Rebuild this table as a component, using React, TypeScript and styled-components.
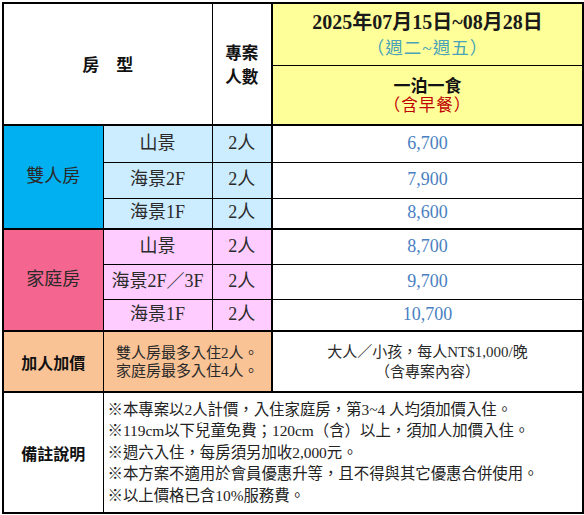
import React from "react";
import styled, { createGlobalStyle } from "styled-components";

const GlobalStyle = createGlobalStyle`
  html, body {
    margin: 0;
    padding: 0;
    background: #fff;
  }
  body {
    font-family: "Liberation Serif", "Noto Sans CJK TC", serif;
    color: #222;
  }
`;

const Page = styled.div`
  padding: 2px 0 0 2px;
`;

const Sheet = styled.table`
  border-collapse: collapse;
  table-layout: fixed;
  width: 580px;
  border: 2px solid #000;
`;

const Col = styled.col<{ $w: number }>`
  width: ${(p) => p.$w}px;
`;

const Row = styled.tr<{ $h: number }>`
  height: ${(p) => p.$h}px;
`;

const Cell = styled.td<{
  $bg?: string;
  $color?: string;
  $size?: number;
  $left?: boolean;
  $thickBottom?: boolean;
  $thickRight?: boolean;
}>`
  padding: 0;
  border: 1px solid #000;
  ${(p) => (p.$thickBottom ? "border-bottom-width: 2px;" : "")}
  ${(p) => (p.$thickRight ? "border-right-width: 2px;" : "")}
  background: ${(p) => p.$bg ?? "#fff"};
  color: ${(p) => p.$color ?? "#2a2a2a"};
  font-size: ${(p) => p.$size ?? 18}px;
  text-align: ${(p) => (p.$left ? "left" : "center")};
  vertical-align: middle;
  line-height: 1.2;
  white-space: nowrap;
`;

const Stack = styled.div<{ $gap: number }>`
  display: flex;
  flex-direction: column;
  align-items: center;
  gap: ${(p) => p.$gap}px;
`;

const Line = styled.span<{ $color?: string; $size?: number; $bold?: boolean; $track?: number }>`
  display: block;
  color: ${(p) => p.$color ?? "inherit"};
  font-size: ${(p) => (p.$size ? `${p.$size}px` : "inherit")};
  font-weight: ${(p) => (p.$bold ? 700 : "inherit")};
  letter-spacing: ${(p) => p.$track ?? 0}px;
`;

const BoldHead = styled.span<{ $size?: number; $lh?: number }>`
  display: block;
  font-family: "Noto Sans CJK TC", sans-serif;
  font-weight: 700;
  font-size: ${(p) => (p.$size ? `${p.$size}px` : "inherit")};
  line-height: ${(p) => (p.$lh ? `${p.$lh}px` : 1.25)};
  color: #111;
`;

const Notes = styled.div`
  padding: 0 4px;
  font-size: 15.4px;
  line-height: 21.5px;
  color: #222;
`;

const colors = {
  blue: "#00b0f0",
  lightBlue: "#ccecff",
  pink: "#f4658f",
  lightPink: "#ffccff",
  orange: "#f9c396",
  yellow: "#ffff99",
  price: "#4a7fc1",
};

type RoomRow = { name: string; people: string; price: string; h: number };

const groups: { title: string; bg: string; sub: string; rows: RoomRow[] }[] = [
  {
    title: "雙人房",
    bg: colors.blue,
    sub: colors.lightBlue,
    rows: [
      { name: "山景", people: "2人", price: "6,700", h: 37 },
      { name: "海景2F", people: "2人", price: "7,900", h: 36 },
      { name: "海景1F", people: "2人", price: "8,600", h: 31 },
    ],
  },
  {
    title: "家庭房",
    bg: colors.pink,
    sub: colors.lightPink,
    rows: [
      { name: "山景", people: "2人", price: "8,700", h: 35 },
      { name: "海景2F／3F", people: "2人", price: "9,700", h: 35 },
      { name: "海景1F", people: "2人", price: "10,700", h: 32 },
    ],
  },
];

const notes = [
  "※本專案以2人計價，入住家庭房，第3~4 人均須加價入住。",
  "※119cm以下兒童免費；120cm（含）以上，須加人加價入住。",
  "※週六入住，每房須另加收2,000元。",
  "※本方案不適用於會員優惠升等，且不得與其它優惠合併使用。",
  "※以上價格已含10%服務費。",
];

export default function App() {
  return (
    <Page>
      <GlobalStyle />
      <Sheet>
        <colgroup>
          <Col $w={100} />
          <Col $w={109} />
          <Col $w={60} />
          <Col $w={311} />
        </colgroup>
        <tbody>
          <Row $h={62}>
            <Cell colSpan={2} rowSpan={2} $size={17} $thickBottom>
              <BoldHead>房　型</BoldHead>
            </Cell>
            <Cell rowSpan={2} $size={16.5} $thickBottom $thickRight>
              <BoldHead $lh={24}>
                專案
                <br />
                人數
              </BoldHead>
            </Cell>
            <Cell $bg={colors.yellow}>
              <Stack $gap={4}>
                <Line $size={20} $bold $color="#1a1a1a">
                  2025年07月15日~08月28日
                </Line>
                <Line $size={17.5} $track={1} $color="#4aa3b8">
                  （週二~週五）
                </Line>
              </Stack>
            </Cell>
          </Row>
          <Row $h={60}>
            <Cell $bg={colors.yellow} $thickBottom>
              <Stack $gap={1}>
                <BoldHead $size={17}>一泊一食</BoldHead>
                <Line $size={16.5} $track={1} $color="#c00000">
                  （含早餐）
                </Line>
              </Stack>
            </Cell>
          </Row>

          {groups.map((g) =>
            g.rows.map((r, i) => {
              const last = i === g.rows.length - 1;
              return (
                <Row key={g.title + i} $h={r.h}>
                  {i === 0 && (
                    <Cell rowSpan={g.rows.length} $bg={g.bg} $thickBottom>
                      {g.title}
                    </Cell>
                  )}
                  <Cell $bg={g.sub} $thickBottom={last}>
                    {r.name}
                  </Cell>
                  <Cell $bg={g.sub} $thickBottom={last} $thickRight>
                    {r.people}
                  </Cell>
                  <Cell $color={colors.price} $thickBottom={last}>
                    {r.price}
                  </Cell>
                </Row>
              );
            })
          )}

          <Row $h={61}>
            <Cell $bg={colors.orange} $size={16} $thickBottom>
              <BoldHead>加人加價</BoldHead>
            </Cell>
            <Cell colSpan={2} $bg={colors.orange} $size={15} $thickBottom $thickRight>
              <Stack $gap={0}>
                <Line>雙人房最多入住2人。</Line>
                <Line>家庭房最多入住4人。</Line>
              </Stack>
            </Cell>
            <Cell $size={15} $thickBottom>
              <Stack $gap={2}>
                <Line>大人／小孩，每人NT$1,000/晚</Line>
                <Line>（含專案內容）</Line>
              </Stack>
            </Cell>
          </Row>

          <Row $h={121}>
            <Cell $size={16}>
              <BoldHead>備註說明</BoldHead>
            </Cell>
            <Cell colSpan={3} $left>
              <Notes>
                {notes.map((n) => (
                  <div key={n}>{n}</div>
                ))}
              </Notes>
            </Cell>
          </Row>
        </tbody>
      </Sheet>
    </Page>
  );
}
